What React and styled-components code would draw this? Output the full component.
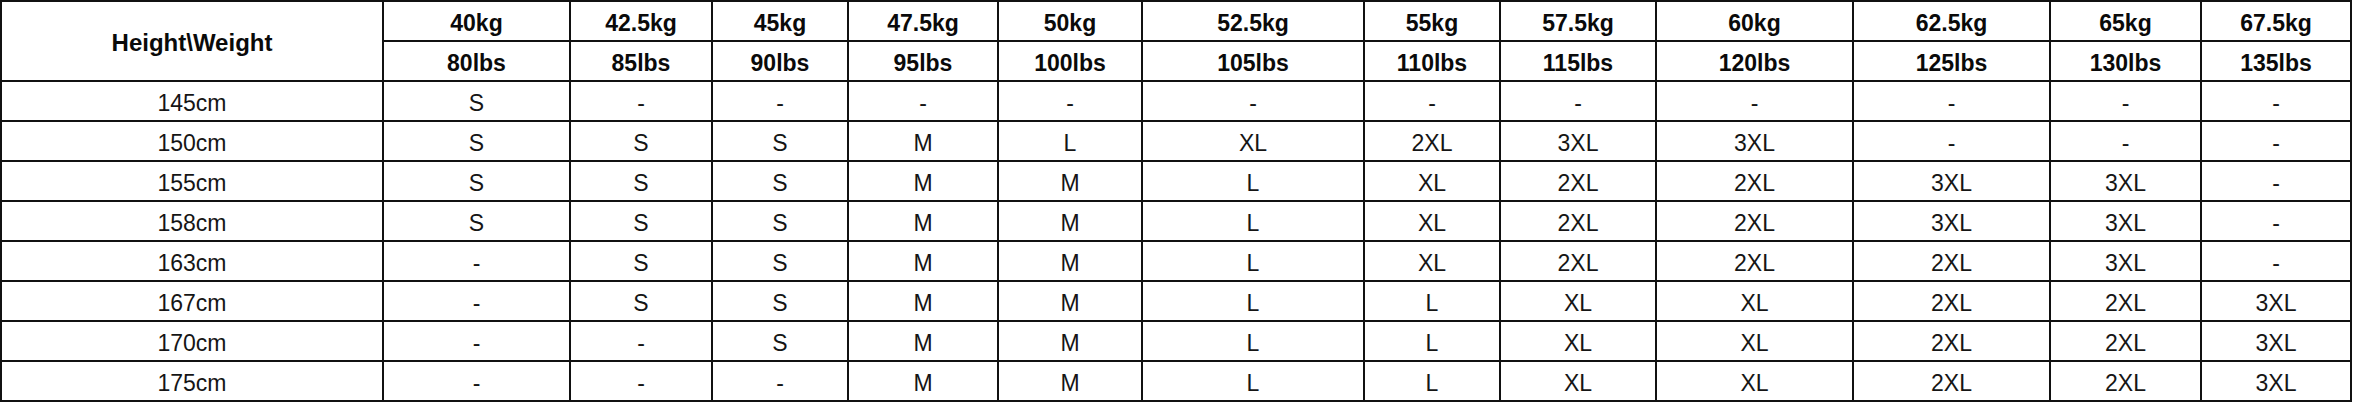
import React from "react";
import styled, { createGlobalStyle } from "styled-components";

const GlobalStyle = createGlobalStyle`
  html, body {
    margin: 0;
    padding: 0;
    background: #ffffff;
  }
  body {
    font-family: "Liberation Sans", Arial, sans-serif;
  }
`;

const Table = styled.table`
  border-collapse: collapse;
  table-layout: fixed;
  width: 2352px;
  color: #111;
`;

const Col = styled.col`
  width: ${(p) => p.$w}px;
`;

const Row = styled.tr`
  height: 40px;
`;

const HeadCell = styled.th`
  border: 2px solid #111;
  padding: 4px 0 0 0;
  font-family: "Liberation Sans", Arial, sans-serif;
  font-weight: 700;
  font-size: ${(p) => (p.$corner ? 24 : 23)}px;
  line-height: 26px;
  text-align: center;
  vertical-align: middle;
  white-space: nowrap;
  color: #0a0a0a;
`;

const Cell = styled.td`
  border: 2px solid #111;
  padding: 4px 0 0 0;
  font-family: "Liberation Sans", Arial, sans-serif;
  font-weight: 400;
  font-size: 23px;
  line-height: 26px;
  text-align: center;
  vertical-align: middle;
  white-space: nowrap;
  color: #151515;
`;

const widths = [382, 187, 142, 136, 150, 144, 222, 136, 156, 197, 197, 151, 150];

const kg = ["40kg", "42.5kg", "45kg", "47.5kg", "50kg", "52.5kg", "55kg", "57.5kg", "60kg", "62.5kg", "65kg", "67.5kg"];
const lbs = ["80lbs", "85lbs", "90lbs", "95lbs", "100lbs", "105lbs", "110lbs", "115lbs", "120lbs", "125lbs", "130lbs", "135lbs"];

const rows = [
  ["145cm", "S", "-", "-", "-", "-", "-", "-", "-", "-", "-", "-", "-"],
  ["150cm", "S", "S", "S", "M", "L", "XL", "2XL", "3XL", "3XL", "-", "-", "-"],
  ["155cm", "S", "S", "S", "M", "M", "L", "XL", "2XL", "2XL", "3XL", "3XL", "-"],
  ["158cm", "S", "S", "S", "M", "M", "L", "XL", "2XL", "2XL", "3XL", "3XL", "-"],
  ["163cm", "-", "S", "S", "M", "M", "L", "XL", "2XL", "2XL", "2XL", "3XL", "-"],
  ["167cm", "-", "S", "S", "M", "M", "L", "L", "XL", "XL", "2XL", "2XL", "3XL"],
  ["170cm", "-", "-", "S", "M", "M", "L", "L", "XL", "XL", "2XL", "2XL", "3XL"],
  ["175cm", "-", "-", "-", "M", "M", "L", "L", "XL", "XL", "2XL", "2XL", "3XL"],
];

export default function App() {
  return (
    <>
      <GlobalStyle />
      <Table>
        <colgroup>
          {widths.map((w, i) => (
            <Col key={i} $w={w} />
          ))}
        </colgroup>
        <thead>
          <Row>
            <HeadCell rowSpan={2} $corner>
              Height\Weight
            </HeadCell>
            {kg.map((k) => (
              <HeadCell key={k}>{k}</HeadCell>
            ))}
          </Row>
          <Row>
            {lbs.map((l) => (
              <HeadCell key={l}>{l}</HeadCell>
            ))}
          </Row>
        </thead>
        <tbody>
          {rows.map((r) => (
            <Row key={r[0]}>
              {r.map((v, i) => (
                <Cell key={i}>{v}</Cell>
              ))}
            </Row>
          ))}
        </tbody>
      </Table>
    </>
  );
}
